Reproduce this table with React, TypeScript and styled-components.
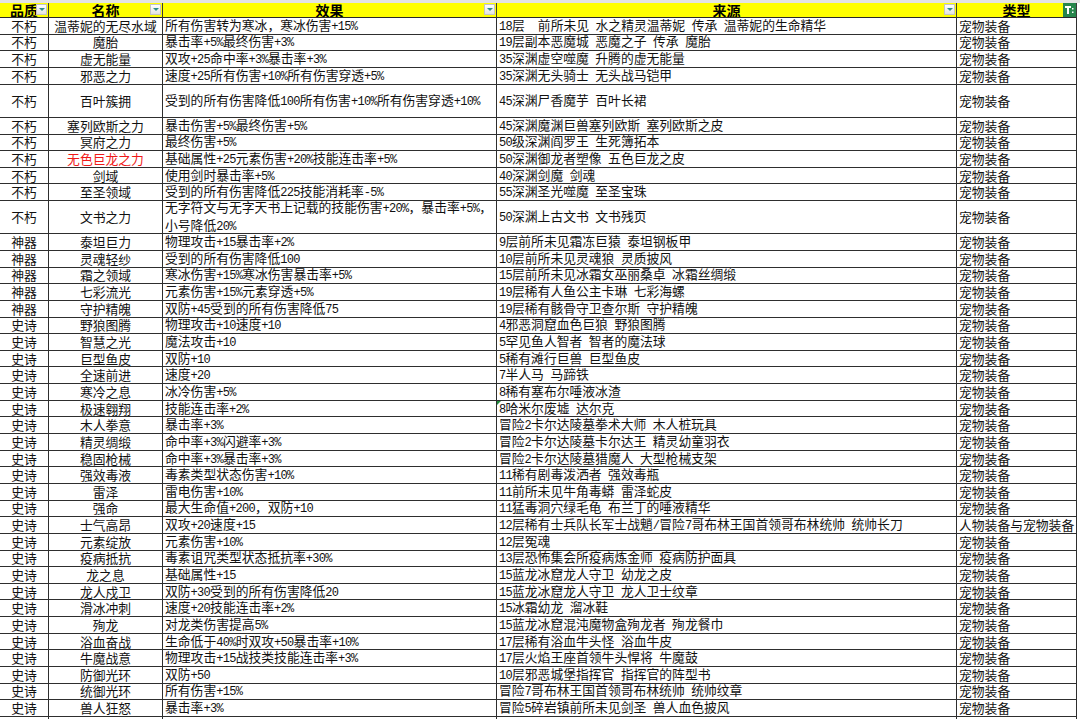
import styled, { createGlobalStyle } from 'styled-components';

const GlobalStyle = createGlobalStyle`
  html, body {
    margin: 0;
    padding: 0;
    background: #fff;
    overflow: hidden;
  }
  body {
    font-family: "Noto Sans CJK SC", "Liberation Sans", sans-serif;
  }
`;

const COLUMNS = '49px 114px 334px 460px 120px';
const ROW_H = 16.65;

type Item = {
    quality: string;
    name: string;
    effect: string;
    source: string;
    kind?: string;
    tall?: boolean;
    red?: boolean;
    flag?: boolean;
};

const PET = '宠物装备';

const items: Item[] = [
    { quality: '不朽', name: '温蒂妮的无尽水域', effect: '所有伤害转为寒冰，寒冰伤害+15%', source: '18层  前所未见 水之精灵温蒂妮 传承 温蒂妮的生命精华' },
    { quality: '不朽', name: '魔胎', effect: '暴击率+5%最终伤害+3%', source: '19层副本恶魔城 恶魔之子 传承 魔胎' },
    { quality: '不朽', name: '虚无能量', effect: '双攻+25命中率+3%暴击率+3%', source: '35深渊虚空噬魔 升腾的虚无能量' },
    { quality: '不朽', name: '邪恶之力', effect: '速度+25所有伤害+10%所有伤害穿透+5%', source: '35深渊无头骑士 无头战马铠甲' },
    { quality: '不朽', name: '百叶簇拥', effect: '受到的所有伤害降低100所有伤害+10%所有伤害穿透+10%', source: '45深渊尸香魔芋 百叶长裙', tall: true },
    { quality: '不朽', name: '塞列欧斯之力', effect: '暴击伤害+5%最终伤害+5%', source: '45深渊魔渊巨兽塞列欧斯 塞列欧斯之皮' },
    { quality: '不朽', name: '冥府之力', effect: '最终伤害+5%', source: '50级深渊阎罗王 生死簿拓本' },
    { quality: '不朽', name: '无色巨龙之力', effect: '基础属性+25元素伤害+20%技能连击率+5%', source: '50深渊御龙者塑像 五色巨龙之皮', red: true },
    { quality: '不朽', name: '剑域', effect: '使用剑时暴击率+5%', source: '40深渊剑魔 剑魂' },
    { quality: '不朽', name: '至圣领域', effect: '受到的所有伤害降低225技能消耗率-5%', source: '55深渊圣光噬魔 至圣宝珠' },
    { quality: '不朽', name: '文书之力', effect: '无字符文与无字天书上记载的技能伤害+20%，暴击率+5%，\n小号降低20%', source: '50深渊上古文书 文书残页', tall: true },
    { quality: '神器', name: '泰坦巨力', effect: '物理攻击+15暴击率+2%', source: '9层前所未见霜冻巨猿 泰坦钢板甲' },
    { quality: '神器', name: '灵魂轻纱', effect: '受到的所有伤害降低100', source: '10层前所未见灵魂狼 灵质披风' },
    { quality: '神器', name: '霜之领域', effect: '寒冰伤害+15%寒冰伤害暴击率+5%', source: '15层前所未见冰霜女巫丽桑卓 冰霜丝绸缎' },
    { quality: '神器', name: '七彩流光', effect: '元素伤害+15%元素穿透+5%', source: '19层稀有人鱼公主卡琳 七彩海螺' },
    { quality: '神器', name: '守护精魄', effect: '双防+45受到的所有伤害降低75', source: '19层稀有骸骨守卫查尔斯 守护精魄' },
    { quality: '史诗', name: '野狼图腾', effect: '物理攻击+10速度+10', source: '4邪恶洞窟血色巨狼 野狼图腾' },
    { quality: '史诗', name: '智慧之光', effect: '魔法攻击+10', source: '5罕见鱼人智者 智者的魔法球' },
    { quality: '史诗', name: '巨型鱼皮', effect: '双防+10', source: '5稀有滩行巨兽 巨型鱼皮' },
    { quality: '史诗', name: '全速前进', effect: '速度+20', source: '7半人马 马蹄铁' },
    { quality: '史诗', name: '寒冷之息', effect: '冰冷伤害+5%', source: '8稀有塞布尔唾液冰渣' },
    { quality: '史诗', name: '极速翱翔', effect: '技能连击率+2%', source: '8哈米尔废墟 达尔克', flag: true },
    { quality: '史诗', name: '木人拳意', effect: '暴击率+3%', source: '冒险2卡尔达陵墓拳术大师 木人桩玩具' },
    { quality: '史诗', name: '精灵绸缎', effect: '命中率+3%闪避率+3%', source: '冒险2卡尔达陵墓卡尔达王 精灵幼童羽衣' },
    { quality: '史诗', name: '稳固枪械', effect: '命中率+3%暴击率+3%', source: '冒险2卡尔达陵墓猎魔人 大型枪械支架' },
    { quality: '史诗', name: '强效毒液', effect: '毒素类型状态伤害+10%', source: '11稀有剧毒泼洒者 强效毒瓶' },
    { quality: '史诗', name: '雷泽', effect: '雷电伤害+10%', source: '11前所未见牛角毒蟒 雷泽蛇皮' },
    { quality: '史诗', name: '强命', effect: '最大生命值+200，双防+10', source: '11猛毒洞穴绿毛龟 布兰丁的唾液精华' },
    { quality: '史诗', name: '士气高昂', effect: '双攻+20速度+15', source: '12层稀有士兵队长军士战魈/冒险7哥布林王国首领哥布林统帅 统帅长刀', kind: '人物装备与宠物装备' },
    { quality: '史诗', name: '元素绽放', effect: '元素伤害+10%', source: '12层冤魂' },
    { quality: '史诗', name: '疫病抵抗', effect: '毒素诅咒类型状态抵抗率+30%', source: '13层恐怖集会所疫病炼金师 疫病防护面具' },
    { quality: '史诗', name: '龙之息', effect: '基础属性+15', source: '15蓝龙冰窟龙人守卫 幼龙之皮' },
    { quality: '史诗', name: '龙人戍卫', effect: '双防+30受到的所有伤害降低20', source: '15蓝龙冰窟龙人守卫 龙人卫士纹章' },
    { quality: '史诗', name: '滑冰冲刺', effect: '速度+20技能连击率+2%', source: '15冰霜幼龙 溜冰鞋' },
    { quality: '史诗', name: '殉龙', effect: '对龙类伤害提高5%', source: '15蓝龙冰窟混沌魔物盒殉龙者 殉龙餐巾' },
    { quality: '史诗', name: '浴血奋战', effect: '生命低于40%时双攻+50暴击率+10%', source: '17层稀有浴血牛头怪 浴血牛皮' },
    { quality: '史诗', name: '牛魔战意', effect: '物理攻击+15战技类技能连击率+3%', source: '17层火焰王座首领牛头悍将 牛魔鼓' },
    { quality: '史诗', name: '防御光环', effect: '双防+50', source: '10层邪恶城堡指挥官 指挥官的阵型书' },
    { quality: '史诗', name: '统御光环', effect: '所有伤害+15%', source: '冒险7哥布林王国首领哥布林统帅 统帅纹章' },
    { quality: '史诗', name: '兽人狂怒', effect: '暴击率+3%', source: '冒险5碎岩镇前所未见剑圣 兽人血色披风' },
];

const Sheet = styled.div`
  width: 1080px;
  height: 719px;
  overflow: hidden;
  background: #fff;
`;

const TopStrip = styled.div`
  height: 3px;
  background: #e3e3e3;
`;

const HeaderRow = styled.div`
  display: grid;
  grid-template-columns: ${COLUMNS};
  height: 15px;
`;

const HeaderCell = styled.div`
  position: relative;
  box-sizing: border-box;
  background: #ffff00;
  border-right: 1px solid #3a3a3a;
  border-bottom: 1px solid #2a2a2a;
  display: flex;
  align-items: center;
  justify-content: center;
  font-size: 14px;
  font-weight: 700;
  line-height: 13px;
  color: #000;
  overflow: hidden;
  white-space: nowrap;
`;

const DropButton = styled.span`
  position: absolute;
  top: 1px;
  right: 1px;
  width: 11px;
  height: 11px;
  box-sizing: border-box;
  border: 1px solid #c4c4c4;
  background: linear-gradient(#ffffff, #e2e2e2);
  display: flex;
  align-items: center;
  justify-content: center;

  &::after {
    content: '';
    border-left: 3px solid transparent;
    border-right: 3px solid transparent;
    border-top: 3px solid #2f8d8a;
  }
`;

const FilterBadge = styled.span`
  position: absolute;
  top: -1px;
  right: 0;
  width: 13px;
  height: 15px;
  background: #27864c;
  display: flex;
  align-items: center;
  justify-content: center;
`;

const Row = styled.div<{ $tall?: boolean }>`
  display: grid;
  grid-template-columns: ${COLUMNS};
  height: ${p => (p.$tall ? ROW_H * 2 : ROW_H)}px;
`;

const Cell = styled.div<{ $center?: boolean; $red?: boolean; $flag?: boolean; $lines?: number }>`
  position: relative;
  box-sizing: border-box;
  border-right: 1px solid #2e2e2e;
  border-bottom: 1px solid #2e2e2e;
  display: flex;
  align-items: center;
  justify-content: ${p => (p.$center ? 'center' : 'flex-start')};
  padding: 0 2px;
  font-size: 12.8px;
  line-height: ${p => ((p.$lines ?? 1) > 1 ? 16 : 14)}px;
  color: ${p => (p.$red ? '#f01818' : '#111')};
  white-space: pre;
  overflow: hidden;

  ${p =>
        p.$flag &&
        `&::before {
      content: '';
      position: absolute;
      top: 0;
      left: 0;
      border-top: 4px solid #1e8a3c;
      border-right: 4px solid transparent;
    }`}
`;

const CellText = styled.span`
  display: inline;
`;

// half-width runs drawn in a fixed-pitch face, like the sheet's SimSun
const Ascii = styled.span`
  font-family: "Liberation Mono", "DejaVu Sans Mono", monospace;
  font-size: 12px;
  letter-spacing: -0.7px;
`;

const halfWidth = /^[\x20-\x7e]+$/;

const renderText = (s: string) => (
    <CellText>
        {s.split(/([\x20-\x7e]+)/).map((part, i) =>
            halfWidth.test(part) ? <Ascii key={i}>{part}</Ascii> : part
        )}
    </CellText>
);

const FilterIcon = () => (
    <svg width="9" height="10" viewBox="0 0 9 10">
        <rect x="0" y="1" width="6" height="2" fill="#fff" />
        <rect x="2" y="3" width="2" height="6" fill="#fff" />
        <rect x="7" y="3" width="1.5" height="1.5" fill="#fff" />
        <rect x="7" y="6.5" width="1.5" height="1.5" fill="#fff" />
    </svg>
);

const headers = ['品质', '名称', '效果', '来源', '类型'];

export default function App() {
    return (
        <Sheet>
            <GlobalStyle />
            <TopStrip />
            <HeaderRow>
                {headers.map((h, i) => (
                    <HeaderCell key={h}>
                        {h}
                        {i < 4 ? (
                            <DropButton />
                        ) : (
                            <FilterBadge>
                                <FilterIcon />
                            </FilterBadge>
                        )}
                    </HeaderCell>
                ))}
            </HeaderRow>
            {items.map(item => (
                <Row key={item.name} $tall={item.tall}>
                    <Cell $center>{item.quality}</Cell>
                    <Cell $center $red={item.red}>{item.name}</Cell>
                    <Cell $lines={item.effect.split('\n').length}>{renderText(item.effect)}</Cell>
                    <Cell $flag={item.flag}>{renderText(item.source)}</Cell>
                    <Cell>{item.kind ?? PET}</Cell>
                </Row>
            ))}
            <Row>
                <Cell />
                <Cell />
                <Cell />
                <Cell />
                <Cell />
            </Row>
        </Sheet>
    );
}
